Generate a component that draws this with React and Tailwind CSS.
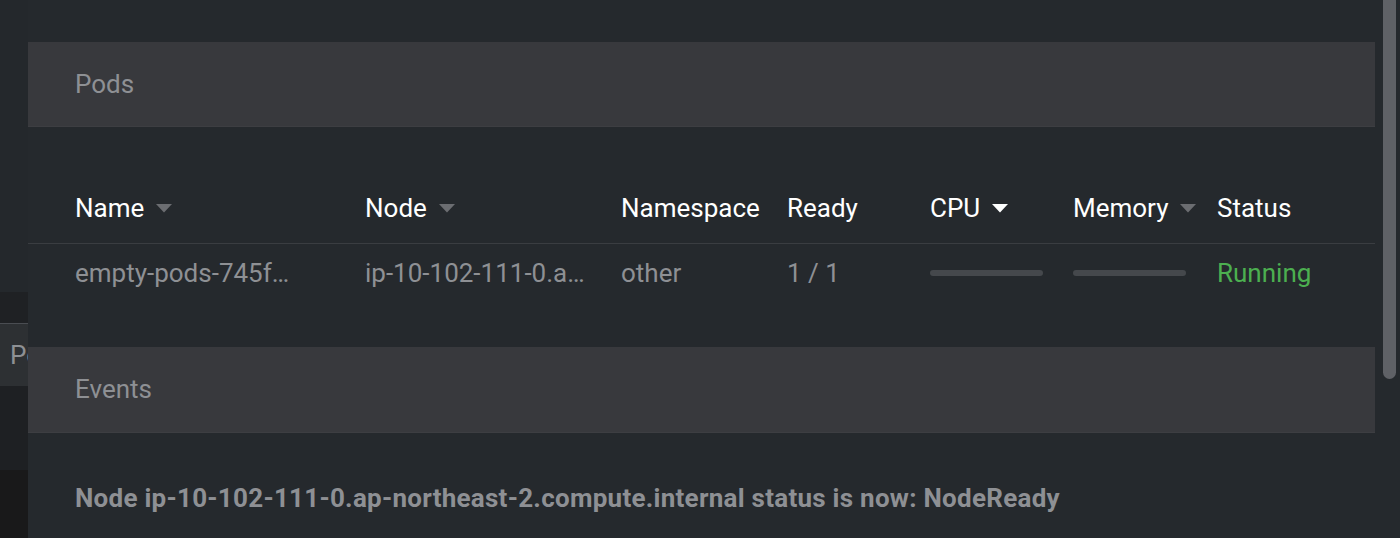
import React from "react";

const Caret = ({ white }) => (
  <svg width="16" height="9" viewBox="0 0 16 9" className="ml-3 shrink-0">
    <path d="M0 0 L16 0 L8 8.5 Z" fill={white ? "#ffffff" : "#6b6d71"} />
  </svg>
);

const Bar = () => (
  <div className="w-[113px] h-[6px] rounded-full bg-[#45484c]" />
);

export default function App() {
  const font = { fontFamily: "Roboto, 'Noto Sans', sans-serif" };
  return (
    <div className="flex w-[1400px] h-[538px] overflow-hidden bg-[#25292d]" style={font}>
      {/* left background strip */}
      <div className="w-[28px] shrink-0 flex flex-col overflow-hidden">
        <div className="h-[292px] bg-[#24282c]" />
        <div className="h-[31px] bg-[#1f2124]" />
        <div className="h-[63px] bg-[#2d3033] border-t border-[#4a4d52] flex items-center overflow-hidden">
          <span className="pl-[10px] text-[26px] text-[#8e9094] whitespace-nowrap">Pods</span>
        </div>
        <div className="h-[84px] bg-[#1e2023]" />
        <div className="flex-1 bg-[#19191a]" />
      </div>

      {/* main panel */}
      <div className="relative flex-1 bg-[#25292d] pt-[42px] pr-[25px]">
        <div className="h-[85px] bg-[#38393d] border-b border-[#3d3e42] flex items-center pl-[47px]">
          <span className="text-[26px] text-[#8e9094]">Pods</span>
        </div>

        <div className="mt-[46px] pl-[47px] grid grid-cols-[290px_256px_166px_143px_143px_144px_1fr] h-[71px] items-center border-b border-[#3a3d41] text-[26px] text-white">
          <div className="flex items-center">Name<Caret /></div>
          <div className="flex items-center">Node<Caret /></div>
          <div>Namespace</div>
          <div>Ready</div>
          <div className="flex items-center">CPU<Caret white /></div>
          <div className="flex items-center">Memory<Caret /></div>
          <div>Status</div>
        </div>

        <div className="pl-[47px] grid grid-cols-[290px_256px_166px_143px_143px_144px_1fr] h-[58px] items-center text-[26px] text-[#8e9094]">
          <div className="whitespace-nowrap">empty-pods-745f…</div>
          <div className="whitespace-nowrap">ip-10-102-111-0.a…</div>
          <div>other</div>
          <div>1 / 1</div>
          <div><Bar /></div>
          <div><Bar /></div>
          <div className="text-[#4caf50]">Running</div>
        </div>

        <div className="mt-[45px] h-[86px] bg-[#38393d] border-b border-[#3d3e42] flex items-center pl-[47px]">
          <span className="text-[26px] text-[#8e9094]">Events</span>
        </div>

        <div className="pl-[47px] pt-[46px] text-[26px] font-bold tracking-[0.26px] text-[#8e9094] whitespace-nowrap">
          Node ip-10-102-111-0.ap-northeast-2.compute.internal status is now: NodeReady
        </div>

        {/* scrollbar */}
        <div className="absolute top-0 left-[1355px] w-[13px] h-[379px] rounded-b-full bg-[#5f6166]" />
      </div>
    </div>
  );
}
